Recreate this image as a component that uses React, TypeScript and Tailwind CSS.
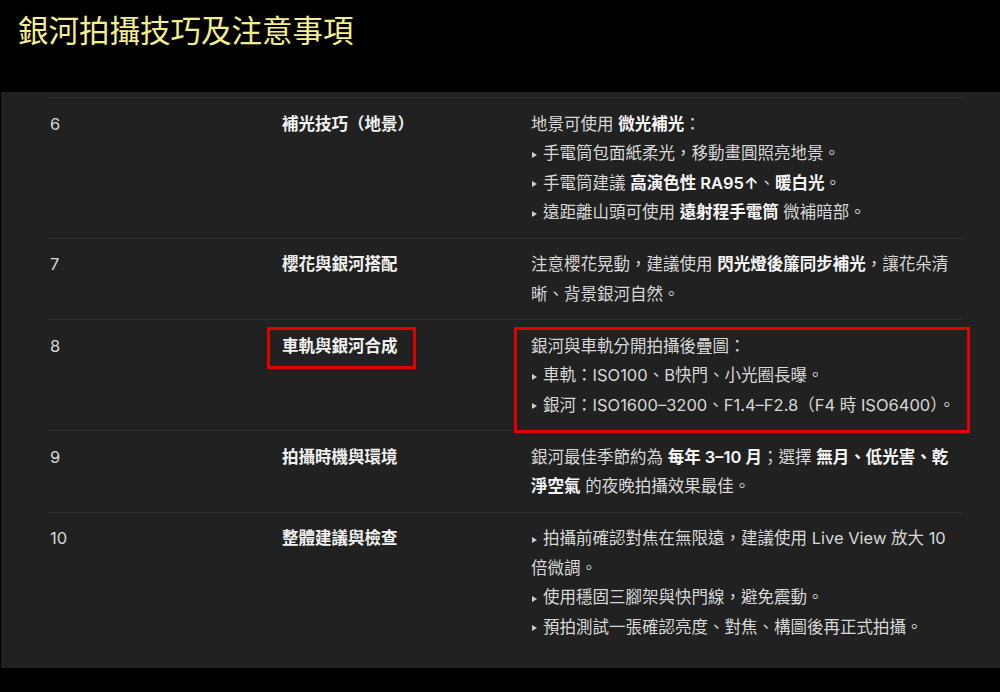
import type { ReactNode } from "react"

type Row = {
  no: string
  title: string
  body: ReactNode
  mark?: boolean
}

function Bullet() {
  return (
    <span className="ml-[1px] mr-[6px] inline-block h-0 w-0 border-y-[3.5px] border-l-[5px] border-y-transparent border-l-[#cfcfcf] align-middle" />
  )
}

function B({ children }: { children: ReactNode }) {
  return <span className="font-semibold text-[#f7f7f7]">{children}</span>
}

const rows: Row[] = [
  {
    no: "6",
    title: "補光技巧（地景）",
    body: (
      <>
        <div>
          地景可使用 <B>微光補光</B>：
        </div>
        <div>
          <Bullet />
          手電筒包面紙柔光，移動畫圓照亮地景。
        </div>
        <div>
          <Bullet />
          手電筒建議 <B>高演色性 RA95↑</B>、<B>暖白光</B>。
        </div>
        <div>
          <Bullet />
          遠距離山頭可使用 <B>遠射程手電筒</B> 微補暗部。
        </div>
      </>
    ),
  },
  {
    no: "7",
    title: "櫻花與銀河搭配",
    body: (
      <div>
        注意櫻花晃動，建議使用 <B>閃光燈後簾同步補光</B>，讓花朵清晰、背景銀河自然。
      </div>
    ),
  },
  {
    no: "8",
    title: "車軌與銀河合成",
    mark: true,
    body: (
      <>
        <div>銀河與車軌分開拍攝後疊圖：</div>
        <div>
          <Bullet />
          車軌：ISO100、B快門、小光圈長曝。
        </div>
        <div>
          <Bullet />
          銀河：ISO1600–3200、F1.4–F2.8（F4 時 ISO6400）。
        </div>
      </>
    ),
  },
  {
    no: "9",
    title: "拍攝時機與環境",
    body: (
      <div>
        銀河最佳季節約為 <B>每年 3–10 月</B>；選擇 <B>無月、低光害、乾淨空氣</B> 的夜晚拍攝效果最佳。
      </div>
    ),
  },
  {
    no: "10",
    title: "整體建議與檢查",
    body: (
      <>
        <div>
          <Bullet />
          拍攝前確認對焦在無限遠，建議使用 Live View 放大 10 倍微調。
        </div>
        <div>
          <Bullet />
          使用穩固三腳架與快門線，避免震動。
        </div>
        <div>
          <Bullet />
          預拍測試一張確認亮度、對焦、構圖後再正式拍攝。
        </div>
      </>
    ),
  },
]

export default function App() {
  return (
    <div className="min-h-[692px] w-full bg-black font-['Inter','Noto_Sans_CJK_TC',sans-serif]">
      <div className="h-[92px] pl-[18px] pt-[9px]">
        <h1 className="font-['Noto_Sans_CJK_TC',sans-serif] text-[30.5px] font-normal leading-[40px] text-[#f3ef8e]">
          銀河拍攝技巧及注意事項
        </h1>
      </div>
      <div className="ml-[1px] bg-[#212121] pb-[16px] pt-[5px]">
        <div className="ml-[47px] w-[915px]">
          {rows.map((row) => (
            <div
              key={row.no}
              className="relative grid grid-cols-[232px_249px_1fr] border-t border-[#313131] pb-[10px] pt-[11.5px] text-[16.5px] leading-[29.5px]"
            >
              <div className="pl-[2px] text-[#d9d9d9]">{row.no}</div>
              <div className="pl-[2px] font-semibold text-[#f2f2f2]">{row.title}</div>
              <div className="pl-[2px] pr-[4px] text-[#d8d8d8]">{row.body}</div>
              {row.mark ? (
                <>
                  <div className="pointer-events-none absolute left-[219px] top-[7px] z-10 h-[42px] w-[149px] border-[3px] border-[#e40000]" />
                  <div className="pointer-events-none absolute left-[466px] top-[7px] z-10 h-[106px] w-[456px] border-[3px] border-[#e40000]" />
                </>
              ) : null}
            </div>
          ))}
        </div>
      </div>
    </div>
  )
}
